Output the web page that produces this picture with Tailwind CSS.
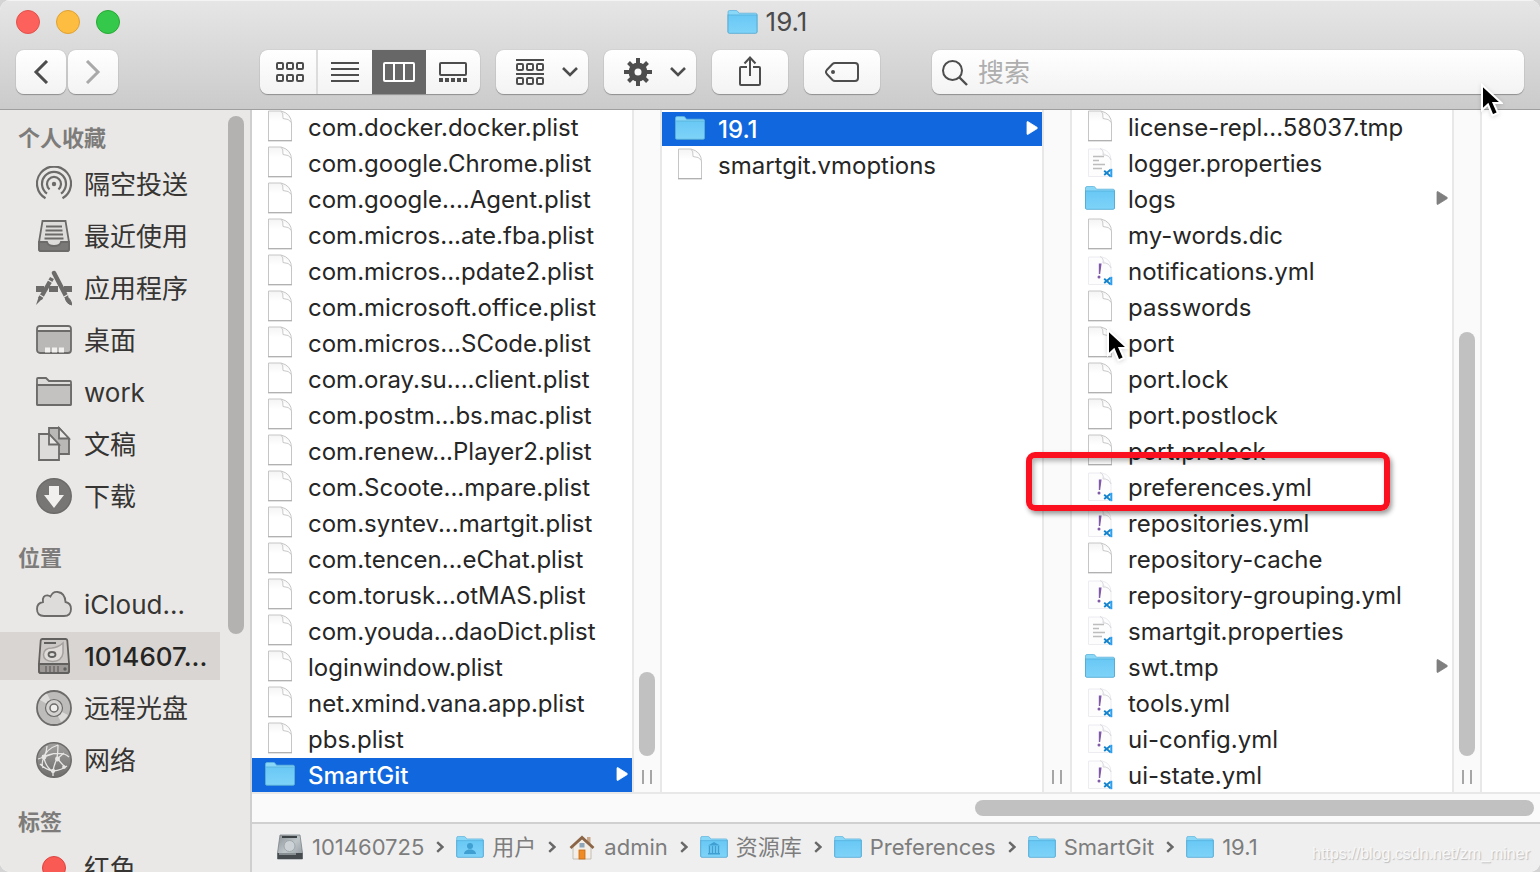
<!DOCTYPE html>
<html lang="zh-CN">
<head>
<meta charset="utf-8">
<meta name="viewport" content="width=device-width, initial-scale=1">
<title>19.1</title>
<script src="https://cdn.jsdelivr.net/npm/@tailwindcss/browser@4"></script>
</head>
<body class="h-screen overflow-hidden bg-[#d4d4d4] font-['Inter','Noto_Sans_CJK_SC',sans-serif] text-[#262626]">

<!-- Shared icons -->
<svg class="absolute size-0" aria-hidden="true">
  <defs>
    <linearGradient id="gFolder" x1="0" y1="0" x2="0" y2="1"><stop offset="0" stop-color="#69c8f5"/><stop offset="1" stop-color="#7ed3f8"/></linearGradient>
    <linearGradient id="gPage" x1="0" y1="0" x2="0" y2="1"><stop offset="0" stop-color="#f4f4f4"/><stop offset=".35" stop-color="#fff"/></linearGradient>
    <linearGradient id="gDisk" x1="0" y1="0" x2="1" y2="1"><stop offset="0" stop-color="#8b9398"/><stop offset=".5" stop-color="#c0c7cb"/><stop offset="1" stop-color="#8d959a"/></linearGradient>
    <linearGradient id="gGlobe" x1="0" y1="0" x2="0" y2="1"><stop offset="0" stop-color="#a2a1a0"/><stop offset="1" stop-color="#6f6e6d"/></linearGradient>
  </defs>
  <symbol id="folder" viewBox="0 0 30 24">
    <path d="M.5 22V2Q.5.5 2 .5H8.500Q9.500.5 10 1.200L11.500 3.200H28Q29.500 3.200 29.500 4.700V22Z" fill="#8ad8f8" stroke="#5fb4dc" stroke-width=".8"/>
    <path d="M.5 5H29.500V22Q29.500 23.300 28.200 23.300H1.800Q.5 23.300.5 22Z" fill="url(#gFolder)"/>
    <path d="M.5 5H29.500" stroke="#58b3df" stroke-width=".9"/>
    <path d="M.5 4.500V22Q.5 23.300 1.800 23.300H28.200Q29.500 23.300 29.500 22V4.500" fill="none" stroke="#56aad3" stroke-width=".9"/>
  </symbol>
  <symbol id="file" viewBox="0 0 26 32">
    <path d="M1.500 1H14Q24.500 3.500 24.500 14V30.500H1.500Z" fill="url(#gPage)" stroke="#c6c6c6" stroke-width="1"/>
    <path d="M1 30.700H25" stroke="#b0b0b0" stroke-width="1.300"/>
    <path d="M14 1Q16.500 3 16 8.500Q22 8.500 24.500 12.500" fill="#fff" stroke="#c9c9c9" stroke-width="1"/>
  </symbol>
  <symbol id="vs" viewBox="0 0 26 32">
    <path d="M1.500 3H15Q24 5 24 14V30.500H1.500Z" fill="#fdfdfe" stroke="#ececf1" stroke-width="1"/>
    <path d="M13 2.500Q17 4 16 9Q22 8.500 24 14" fill="#f1f1f4" stroke="#d8d8dc" stroke-width="1"/>
    <path d="M17.200 24.800L23.500 30.200M17.200 29L23.500 23.800" stroke="#1583cc" stroke-width="1.900"/><path d="M24.300 22.800V31.200" stroke="#2b9ff0" stroke-width="2"/>
  </symbol>
  <symbol id="yml" viewBox="0 0 26 32"><use href="#vs"/>
    <path d="M11.800 9.500H14.600L13.200 20H11.800Z" fill="#8059a8"/><circle cx="12" cy="23" r="1.500" fill="#8059a8"/>
  </symbol>
  <symbol id="props" viewBox="0 0 26 32"><use href="#vs"/>
    <path d="M6 10.500H17M6 14.500H12M6 18.500H18M6 22.500H15" stroke="#bdbdbd" stroke-width="1.700"/>
  </symbol>
  <symbol id="play" viewBox="0 0 12 14"><path d="M1 1.200Q1 .2 2 .7L11 6.300Q12 7 11 7.700L2 13.300Q1 13.800 1 12.800Z" fill="currentColor" stroke="currentColor" stroke-width=".8"/></symbol>
  <symbol id="crumb" viewBox="0 0 8 12"><path d="M1.200 1.200L6.400 6L1.200 10.800" fill="none" stroke="#686868" stroke-width="2.400"/></symbol>
  <symbol id="pointer" viewBox="0 0 22 36">
    <path d="M1 2V27L7 21.500L11.500 32.500L17 30L12.500 20H20.500Z" fill="#000" stroke="#fff" stroke-width="2"/>
  </symbol>
</svg>

<div class="relative flex h-full flex-col overflow-hidden rounded-[10px] bg-white">

  <!-- Title and toolbar -->
  <header class="h-[110px] shrink-0 border-b border-[#9f9f9f] bg-linear-to-b from-[#e6e6e6] to-[#cbcbcb] shadow-[inset_0_1px_0_#f4f4f4]">
    <div class="flex h-[50px] items-center pr-[22px] pb-[6px] pl-4">
      <div class="flex flex-1 gap-4">
        <button aria-label="关闭" class="size-6 rounded-full border border-[#e2514b] bg-[#fc615c]"></button>
        <button aria-label="最小化" class="size-6 rounded-full border border-[#dfa033] bg-[#fdbd41]"></button>
        <button aria-label="缩放" class="size-6 rounded-full border border-[#27a834] bg-[#34c94a]"></button>
      </div>
      <h1 class="flex items-center gap-2 text-[26px] leading-8 text-[#4b4b4b]">
        <svg class="h-6 w-[31px]"><use href="#folder"/></svg>19.1
      </h1>
      <div class="flex-1"></div>
    </div>

    <div class="flex h-[44px] items-stretch px-4 text-[#4d4d4d]">
      <div class="flex gap-[2px]">
        <button aria-label="后退" class="flex w-[50px] items-center justify-center rounded-lg bg-linear-to-b from-white to-[#f3f3f3] shadow-[0_1px_1px_#8f8f8f,0_0_1px_#999]">
          <svg class="h-6 w-4" viewBox="0 0 16 24" fill="none" stroke="currentColor" stroke-width="3"><path d="M14 1L3 12L14 23"/></svg>
        </button>
        <button aria-label="前进" class="flex w-[50px] items-center justify-center rounded-lg bg-linear-to-b from-white to-[#f3f3f3] text-[#a9a9a9] shadow-[0_1px_1px_#8f8f8f,0_0_1px_#999]">
          <svg class="h-6 w-4" viewBox="0 0 16 24" fill="none" stroke="currentColor" stroke-width="3"><path d="M2 1L13 12L2 23"/></svg>
        </button>
      </div>

      <div class="ml-[142px] flex w-[220px] rounded-lg bg-linear-to-b from-white to-[#f3f3f3] shadow-[0_1px_1px_#8f8f8f,0_0_1px_#999]">
        <button aria-label="图标" class="flex w-[58px] items-center justify-center border-r-2 border-[#dcdcdc] pl-1">
          <svg class="h-5 w-7" viewBox="0 0 28 20" fill="none" stroke="currentColor" stroke-width="2"><rect x="1" y="1" width="6" height="6" rx="1"/><rect x="11" y="1" width="6" height="6" rx="1"/><rect x="21" y="1" width="6" height="6" rx="1"/><rect x="1" y="13" width="6" height="6" rx="1"/><rect x="11" y="13" width="6" height="6" rx="1"/><rect x="21" y="13" width="6" height="6" rx="1"/></svg>
        </button>
        <button aria-label="列表" class="flex w-[54px] items-center justify-center">
          <svg class="h-5 w-7" viewBox="0 0 28 20" stroke="currentColor" stroke-width="2"><path d="M0 1H28M0 7H28M0 13H28M0 19H28"/></svg>
        </button>
        <button aria-label="分栏" aria-pressed="true" class="flex w-[54px] items-center justify-center bg-[#676767] text-white">
          <svg class="h-5 w-8" viewBox="0 0 32 20" fill="none" stroke="currentColor" stroke-width="2"><rect x="1" y="1" width="30" height="18" rx="1"/><path d="M11 1V19M21 1V19"/></svg>
        </button>
        <button aria-label="画廊" class="flex w-[54px] items-center justify-center">
          <svg class="h-5 w-7" viewBox="0 0 28 20" fill="none" stroke="currentColor" stroke-width="2"><rect x="1" y="1" width="26" height="12" rx="1"/><path d="M0 18H28" stroke-width="4" stroke-dasharray="4 2"/></svg>
        </button>
      </div>

      <button aria-label="排列" class="ml-4 flex w-[92px] items-center gap-[18px] rounded-lg bg-linear-to-b from-white to-[#f3f3f3] pl-5 shadow-[0_1px_1px_#8f8f8f,0_0_1px_#999]">
        <svg class="h-[26px] w-7" viewBox="0 0 28 26" fill="none" stroke="currentColor" stroke-width="2"><path d="M0 1H28M0 15H28"/><rect x="1" y="5" width="6" height="6" rx="1"/><rect x="11" y="5" width="6" height="6" rx="1"/><rect x="21" y="5" width="6" height="6" rx="1"/><rect x="1" y="19" width="6" height="6" rx="1"/><rect x="11" y="19" width="6" height="6" rx="1"/><rect x="21" y="19" width="6" height="6" rx="1"/></svg>
        <svg class="h-[10px] w-4" viewBox="0 0 16 10" fill="none" stroke="currentColor" stroke-width="2.600"><path d="M1 1L8 8L15 1"/></svg>
      </button>

      <button aria-label="操作" class="ml-4 flex w-[92px] items-center gap-[18px] rounded-lg bg-linear-to-b from-white to-[#f3f3f3] pl-5 shadow-[0_1px_1px_#8f8f8f,0_0_1px_#999]">
        <svg class="size-7" viewBox="0 0 28 28" stroke="currentColor" stroke-width="4"><path d="M14 0V28M0 14H28M4.500 4.500L23.500 23.500M23.500 4.500L4.500 23.500"/><circle cx="14" cy="14" r="6.500" fill="#fafafa" stroke-width="6"/></svg>
        <svg class="h-[10px] w-4" viewBox="0 0 16 10" fill="none" stroke="currentColor" stroke-width="2.600"><path d="M1 1L8 8L15 1"/></svg>
      </button>

      <button aria-label="共享" class="ml-4 flex w-[76px] justify-center rounded-lg bg-linear-to-b from-white to-[#f3f3f3] pt-[6px] shadow-[0_1px_1px_#8f8f8f,0_0_1px_#999]">
        <svg class="h-[30px] w-6" viewBox="0 0 24 30" fill="none" stroke="currentColor" stroke-width="2"><path d="M9 11H3Q2 11 2 12V28Q2 29 3 29H21Q22 29 22 28V12Q22 11 21 11H15"/><path d="M12 20V2M6.500 7.500L12 1.500L17.500 7.500"/></svg>
      </button>

      <button aria-label="标签" class="ml-4 flex w-[76px] items-center justify-center rounded-lg bg-linear-to-b from-white to-[#f3f3f3] shadow-[0_1px_1px_#8f8f8f,0_0_1px_#999]">
        <svg class="h-5 w-[34px]" viewBox="0 0 34 20" fill="none" stroke="currentColor" stroke-width="2"><path d="M10 1H30Q33 1 33 4V16Q33 19 30 19H10Q8.500 19 7.500 18L1.800 12Q.2 10 1.800 8L7.500 2Q8.500 1 10 1Z"/><circle cx="8" cy="10" r="2" fill="currentColor" stroke="none"/></svg>
      </button>

      <label class="ml-[52px] flex flex-1 items-center gap-[10px] rounded-lg bg-linear-to-b from-white to-[#f3f3f3] pt-[2px] pl-[10px] shadow-[0_1px_1px_#8f8f8f,0_0_1px_#999]">
        <svg class="size-[26px]" viewBox="0 0 26 26" fill="none" stroke="currentColor" stroke-width="2"><circle cx="10.500" cy="10.500" r="9.500"/><path d="M17.500 17.500L25 25" stroke-width="2.400"/></svg>
        <input type="search" aria-label="搜索" placeholder="搜索" class="min-w-0 flex-1 bg-transparent text-[26px] leading-8 outline-none placeholder:text-[#aeaeae]">
      </label>
    </div>
  </header>

  <div class="flex min-h-0 flex-1">

    <!-- Sidebar -->
    <aside class="flex w-[252px] shrink-0 border-r-2 border-[#cfcfcf] bg-[#e9e8e6] text-[26px] text-[#363533]">
      <nav aria-label="边栏" class="h-full w-[220px] overflow-hidden">
        <h2 class="px-[18px] pt-3 pb-[6px] text-[22px] leading-8 font-bold text-[#7d7c7a]">个人收藏</h2>
        <div class="flex flex-col gap-1">
          <a href="#" class="flex h-12 items-center gap-3 pl-9"><svg class="size-9 shrink-0" viewBox="0 0 36 36" fill="none" stroke="#6c6b69" stroke-width="2.200"><path d="M9.500 32.300A17 17 0 1 1 26.500 32.300M11 27.600A12 12 0 1 1 25 27.600M13.600 23.400A7 7 0 1 1 22.400 23.400"/><circle cx="18" cy="18" r="2.200" fill="#6c6b69" stroke="none"/></svg>隔空投送</a>
          <a href="#" class="flex h-12 items-center gap-3 pl-9"><svg class="size-9 shrink-0" viewBox="0 0 36 36" fill="none" stroke="#6c6b69" stroke-width="1.800"><path d="M6.500 3H29.500L33 24V31Q33 33 31 33H5Q3 33 3 31V24Z" fill="#dddcda"/><path d="M3 24H11Q12 28 18 28Q24 28 25 24H33V31Q33 33 31 33H5Q3 33 3 31Z" fill="#7a7977"/><path d="M10 8.500H26M9.500 12.500H26.500M9 16.500H27M8.500 20.500H27.500"/></svg>最近使用</a>
          <a href="#" class="flex h-12 items-center gap-3 pl-9"><svg class="size-9 shrink-0" viewBox="0 0 36 36" fill="none" stroke="#6c6b69"><path d="M0 19H8M13 19H22M28 19H36" stroke-width="6"/><path d="M16 8L4 29" stroke-width="4.500"/><path d="M3 26L0 35L7 28Z" fill="#6c6b69" stroke="none"/><path d="M18 3L30 26" stroke-width="4.500" stroke-linecap="round"/><path d="M29 27Q34 26 36 35Q30 34 29 27Z" fill="#6c6b69" stroke-width="1"/><path d="M12 10L18 13.500M28 27L33 24M4 25L8 27.500" stroke="#e9e8e6" stroke-width="1.200"/></svg>应用程序</a>
          <a href="#" class="flex h-12 items-center gap-3 pl-9"><svg class="size-9 shrink-0" viewBox="0 0 36 36" fill="none" stroke="#6c6b69" stroke-width="1.800"><rect x="1" y="4" width="34" height="27" rx="3" fill="#b9b8b6"/><path d="M2 8V7Q2 5 4 5H32Q34 5 34 7V8Z" fill="#e9e8e6" stroke="none"/><path d="M1 9H35"/><path d="M9 28H28" stroke="#f1f0ee" stroke-width="5" stroke-dasharray="5 2"/></svg>桌面</a>
          <a href="#" class="flex h-12 items-center gap-3 pl-9"><svg class="size-9 shrink-0" viewBox="0 0 36 36" fill="none" stroke="#6c6b69" stroke-width="1.800"><path d="M1 30V5Q1 4 2 4H10L13 7H34Q35 7 35 8V30Q35 31 34 31H2Q1 31 1 30Z" fill="#dddcda"/><path d="M1 11H35V30Q35 31 34 31H2Q1 31 1 30Z" fill="#c3c2c0"/></svg>work</a>
          <a href="#" class="flex h-12 items-center gap-3 pl-9"><svg class="size-9 shrink-0" viewBox="0 0 36 36" fill="none" stroke="#6c6b69" stroke-width="1.800"><path d="M13 2H23L33 12.500V28H13Z" fill="#b9b8b6"/><path d="M23 2V12.500H33Z" fill="#e9e8e6"/><path d="M3 8H13L23 18.500V34H3Z" fill="#dddcda"/><path d="M13 8V18.500H23Z" fill="#e9e8e6"/></svg>文稿</a>
          <a href="#" class="flex h-12 items-center gap-3 pl-9"><svg class="size-9 shrink-0" viewBox="0 0 36 36"><circle cx="18" cy="18" r="17.200" fill="#777674" stroke="#6c6b69" stroke-width="1.500"/><path d="M13 8H23V17H28L18 30L8 17H13Z" fill="#f1f0ee"/></svg>下载</a>
        </div>
        <h2 class="px-[18px] pt-[22px] pb-[6px] text-[22px] leading-8 font-bold text-[#7d7c7a]">位置</h2>
        <div class="flex flex-col gap-1">
          <a href="#" class="flex h-12 items-center gap-3 pl-9"><svg class="size-9 shrink-0" viewBox="0 0 36 36"><path d="M8 30Q1 30 1 23Q1 17 7 16Q6 9 12 9.500Q14 10 14.500 10.500Q17 5 22 6Q29 7 29.500 16Q35 17 35 23Q35 30 28 30Z" fill="#dddcda" stroke="#6c6b69" stroke-width="1.800"/></svg>iCloud...</a>
          <a href="#" aria-current="page" class="flex h-12 items-center gap-3 bg-[#d9d5d2] pl-9 font-medium text-[#262523]"><svg class="size-9 shrink-0" viewBox="0 0 36 36" fill="none" stroke="#62605e" stroke-width="1.800"><path d="M6.500 1H29.500Q31 1 31.300 2.500L33 25V33Q33 35 31 35H5Q3 35 3 33V25L4.700 2.500Q5 1 6.500 1Z" fill="#cbc8c5"/><path d="M3 26H33V33Q33 35 31 35H5Q3 35 3 33Z" fill="#9c9997"/><path d="M8 5H20" stroke-width="2"/><path d="M27 5V15Q26 23 16.500 23.500Q7.500 23 7.500 16.500Q8 10 16 10Q22 9.500 27 5Z" fill="#dedbd8" stroke="#a3a09e" stroke-width="1.500"/><ellipse cx="16" cy="16.500" rx="3.500" ry="2.500"/><path d="M10 28V34M14 28V34M18 28V34M22 28V34" stroke="#62605e" stroke-width="1.200"/><circle cx="29" cy="31" r=".8" fill="#62605e"/></svg>1014607...</a>
          <a href="#" class="flex h-12 items-center gap-3 pl-9"><svg class="size-9 shrink-0" viewBox="0 0 36 36" fill="none" stroke="#6c6b69"><circle cx="18" cy="18" r="17" fill="#bdbcba" stroke-width="1.800"/><path d="M18 18L4 10Q7 5 11 3.500ZM18 18L25 32Q30 29 32 25Z" fill="#dddcda" stroke="none"/><circle cx="18" cy="18" r="8.500" fill="#d3d2d0" stroke-width="1.200"/><circle cx="18" cy="18" r="4" fill="#efeeec" stroke-width="1.500"/></svg>远程光盘</a>
          <a href="#" class="flex h-12 items-center gap-3 pl-9"><svg class="size-9 shrink-0" viewBox="0 0 36 36" fill="none" stroke="#e6e5e3" stroke-width="1.300"><circle cx="18" cy="18" r="17.200" fill="url(#gGlobe)" stroke="#6c6b69" stroke-width="1.500"/><path d="M22 3Q10 7 8 16Q5 20 7 26M8 15Q16 10 28 12Q31 13 33 15M11 4Q11 9 8 15M22 3Q22 10 21 16Q24 20 29 25M28 11L21 17Q18 22 17 30M8 15Q9 24 17 30M4 22Q10 28 17 29Q26 28 31 24M2 17L8 15L17 12M17 29V34"/><circle cx="8" cy="15" r="1.800" fill="#e6e5e3"/><circle cx="21.500" cy="17" r="1.800" fill="#e6e5e3"/><circle cx="17" cy="29" r="1.500" fill="#e6e5e3"/><circle cx="28" cy="25" r="1.200" fill="#e6e5e3"/></svg>网络</a>
        </div>
        <h2 class="px-[18px] pt-[22px] pb-[6px] text-[22px] leading-8 font-bold text-[#7d7c7a]">标签</h2>
        <a href="#" class="flex h-12 items-center gap-3 pl-9"><span class="flex w-9 justify-center"><span class="size-6 rounded-full border border-[#dc4540] bg-[#fa5a54]"></span></span>红色</a>
      </nav>
      <div class="ml-2 pt-[6px]"><div class="h-[518px] w-4 rounded-full bg-[#b3b2b0]"></div></div>
    </aside>

    <main class="flex min-w-0 flex-1 flex-col">

      <!-- Column browser -->
      <div class="flex min-h-0 flex-1 overflow-hidden text-[24px]">
        <ul id="col-preferences" aria-label="Preferences" class="flex w-[380px] shrink-0 flex-col gap-[2px]"></ul>
        <div class="flex w-[30px] shrink-0 flex-col items-center justify-end border-x-2 border-[#e8e8e8] bg-[#fafafa] pb-2">
          <div class="h-[84px] w-4 rounded-full bg-[#c1c1c1]"></div>
          <div class="mt-[14px] h-[14px] w-[10px] border-x-2 border-[#a6a6a6]"></div>
        </div>
        <ul id="col-smartgit" aria-label="SmartGit" class="flex w-[380px] shrink-0 flex-col gap-[2px] pt-[2px]"></ul>
        <div class="flex w-[30px] shrink-0 flex-col items-center justify-end border-x-2 border-[#e8e8e8] bg-[#fafafa] pb-2">
          <div class="h-[14px] w-[10px] border-x-2 border-[#a6a6a6]"></div>
        </div>
        <ul id="col-version" aria-label="19.1" class="flex w-[380px] shrink-0 flex-col gap-[2px]"></ul>
        <div class="flex w-[30px] shrink-0 flex-col items-center justify-end border-x-2 border-[#e8e8e8] bg-[#fafafa] pb-2">
          <div class="h-[424px] w-4 rounded-full bg-[#c1c1c1]"></div>
          <div class="mt-[14px] h-[14px] w-[10px] border-x-2 border-[#a6a6a6]"></div>
        </div>
      </div>

      <!-- Horizontal scroll bar -->
      <div class="flex h-[30px] shrink-0 justify-end border-t-2 border-[#e8e8e8] bg-[#fafafa] pt-[6px] pr-[6px]">
        <div class="h-4 w-[559px] rounded-full bg-[#c1c1c1]"></div>
      </div>

      <!-- Path bar -->
      <nav aria-label="路径" class="flex h-[50px] shrink-0 items-center border-t-2 border-[#d0d0d0] bg-[#efefef] pb-[2px] pl-6 text-[22px] text-[#7d7d7d]">
        <a href="#" class="flex items-center gap-2"><svg class="h-[26px] w-7" viewBox="0 0 28 26"><path d="M4 1H24L26.500 19V25H1.500V19Z" fill="url(#gDisk)" stroke="#7b8388" stroke-width=".8"/><path d="M1.500 19H26.500V25H1.500Z" fill="#454b4f"/><path d="M3 20H20" stroke="#9fa6aa" stroke-width="1.500"/><path d="M6 3H21" stroke="#3c4144" stroke-width="2"/><circle cx="13.500" cy="12" r="5.500" fill="#ccd2d6" stroke="#a1a8ad"/></svg>101460725</a>
        <svg class="mx-3 h-3 w-2"><use href="#crumb"/></svg>
        <a href="#" class="flex items-center gap-2"><svg class="h-[22px] w-7" viewBox="0 0 28 22"><use href="#folder" width="28" height="22"/><circle cx="14" cy="10" r="3" fill="#3f9fd0"/><path d="M8 18Q8 14.500 12.500 13.500H15.500Q20 14.500 20 18Z" fill="#3f9fd0"/></svg>用户</a>
        <svg class="mx-3 h-3 w-2"><use href="#crumb"/></svg>
        <a href="#" class="flex items-center gap-2"><svg class="h-[26px] w-7" viewBox="0 0 28 26"><path d="M5 13L14 5L23 13V25H5Z" fill="#f3efe8" stroke="#b9b2a6" stroke-width=".8"/><path d="M19 3H22.500V10H19Z" fill="#c9a98a"/><path d="M2.500 14L14 3.500L25.500 14" fill="none" stroke="#8c6546" stroke-width="2.800"/><rect x="11.500" y="9" width="5" height="4.500" fill="#8ea6b8"/><rect x="11" y="16" width="6" height="9" fill="#f08a24" stroke="#c56a13" stroke-width=".8"/></svg>admin</a>
        <svg class="mx-3 h-3 w-2"><use href="#crumb"/></svg>
        <a href="#" class="flex items-center gap-2"><svg class="h-[22px] w-7" viewBox="0 0 28 22"><use href="#folder" width="28" height="22"/><path d="M14 6L20 9.500H8ZM8 17H20V18.500H8Z" fill="#3f9fd0"/><path d="M9.500 10V17M12.500 10V17M15.500 10V17M18.500 10V17" stroke="#3f9fd0" stroke-width="1.400"/></svg>资源库</a>
        <svg class="mx-3 h-3 w-2"><use href="#crumb"/></svg>
        <a href="#" class="flex items-center gap-2"><svg class="h-[22px] w-7"><use href="#folder"/></svg>Preferences</a>
        <svg class="mx-3 h-3 w-2"><use href="#crumb"/></svg>
        <a href="#" class="flex items-center gap-2"><svg class="h-[22px] w-7"><use href="#folder"/></svg>SmartGit</a>
        <svg class="mx-3 h-3 w-2"><use href="#crumb"/></svg>
        <a href="#" class="flex items-center gap-2"><svg class="h-[22px] w-7"><use href="#folder"/></svg>19.1</a>
      </nav>
    </main>
  </div>

  <!-- Overlays: annotation box, pointers, watermark -->
  <div class="absolute top-[452px] left-[1026px] h-[59px] w-[364px] rounded-[9px] border-6 border-[#fa101f] shadow-[2px_3px_5px_rgba(0,0,0,0.4),inset_2px_3px_5px_rgba(0,0,0,0.3)]"></div>
  <svg class="absolute top-[328px] left-[1107px] h-9 w-[22px] drop-shadow-sm" aria-hidden="true"><use href="#pointer"/></svg>
  <svg class="absolute top-[83px] left-[1481px] h-9 w-[22px] drop-shadow-sm" aria-hidden="true"><use href="#pointer"/></svg>
  <p class="absolute right-[10px] bottom-2 font-['Liberation_Sans',sans-serif] text-[16px] leading-5 text-[#f8f8f8] [text-shadow:1px_1px_1px_#bdbdbd]">https://blog.csdn.net/zm_miner</p>
</div>

<script>
  // Each entry: [icon, name, selected]
  const columns = {
    'col-preferences': [
      ['file', 'com.docker.docker.plist'], ['file', 'com.google.Chrome.plist'], ['file', 'com.google....Agent.plist'],
      ['file', 'com.micros...ate.fba.plist'], ['file', 'com.micros...pdate2.plist'], ['file', 'com.microsoft.office.plist'],
      ['file', 'com.micros...SCode.plist'], ['file', 'com.oray.su....client.plist'], ['file', 'com.postm...bs.mac.plist'],
      ['file', 'com.renew...Player2.plist'], ['file', 'com.Scoote...mpare.plist'], ['file', 'com.syntev...martgit.plist'],
      ['file', 'com.tencen...eChat.plist'], ['file', 'com.torusk...otMAS.plist'], ['file', 'com.youda...daoDict.plist'],
      ['file', 'loginwindow.plist'], ['file', 'net.xmind.vana.app.plist'], ['file', 'pbs.plist'], ['folder', 'SmartGit', true]
    ],
    'col-smartgit': [['folder', '19.1', true], ['file', 'smartgit.vmoptions']],
    'col-version': [
      ['file', 'license-repl...58037.tmp'], ['props', 'logger.properties'], ['folder', 'logs'], ['file', 'my-words.dic'],
      ['yml', 'notifications.yml'], ['file', 'passwords'], ['file', 'port'], ['file', 'port.lock'], ['file', 'port.postlock'],
      ['file', 'port.prelock'], ['yml', 'preferences.yml'], ['yml', 'repositories.yml'], ['file', 'repository-cache'],
      ['yml', 'repository-grouping.yml'], ['props', 'smartgit.properties'], ['folder', 'swt.tmp'], ['yml', 'tools.yml'],
      ['yml', 'ui-config.yml'], ['yml', 'ui-state.yml']
    ]
  };
  for (const [id, rows] of Object.entries(columns)) {
    document.getElementById(id).innerHTML = rows.map(([icon, name, selected]) => {
      const tone = selected ? 'bg-[#1168de] font-medium text-white' : '';
      const size = icon === 'folder' ? 'h-6 w-[30px]' : 'h-8 w-[26px]';
      const arrow = icon === 'folder'
        ? `<svg class="h-[14px] w-3 ${selected ? 'text-white' : 'text-[#7f7f7f]'}"><use href="#play"/></svg>` : '';
      return `<li><button class="flex h-[34px] w-full items-center gap-[13px] pr-1 pb-[2px] pl-[13px] text-left ${tone}">
        <span class="flex w-[30px] shrink-0 justify-center"><svg class="${size}"><use href="#${icon}"/></svg></span>
        <span class="flex-1 pt-1 leading-8 whitespace-nowrap">${name}</span>${arrow}</button></li>`;
    }).join('');
  }
</script>
</body>
</html>
